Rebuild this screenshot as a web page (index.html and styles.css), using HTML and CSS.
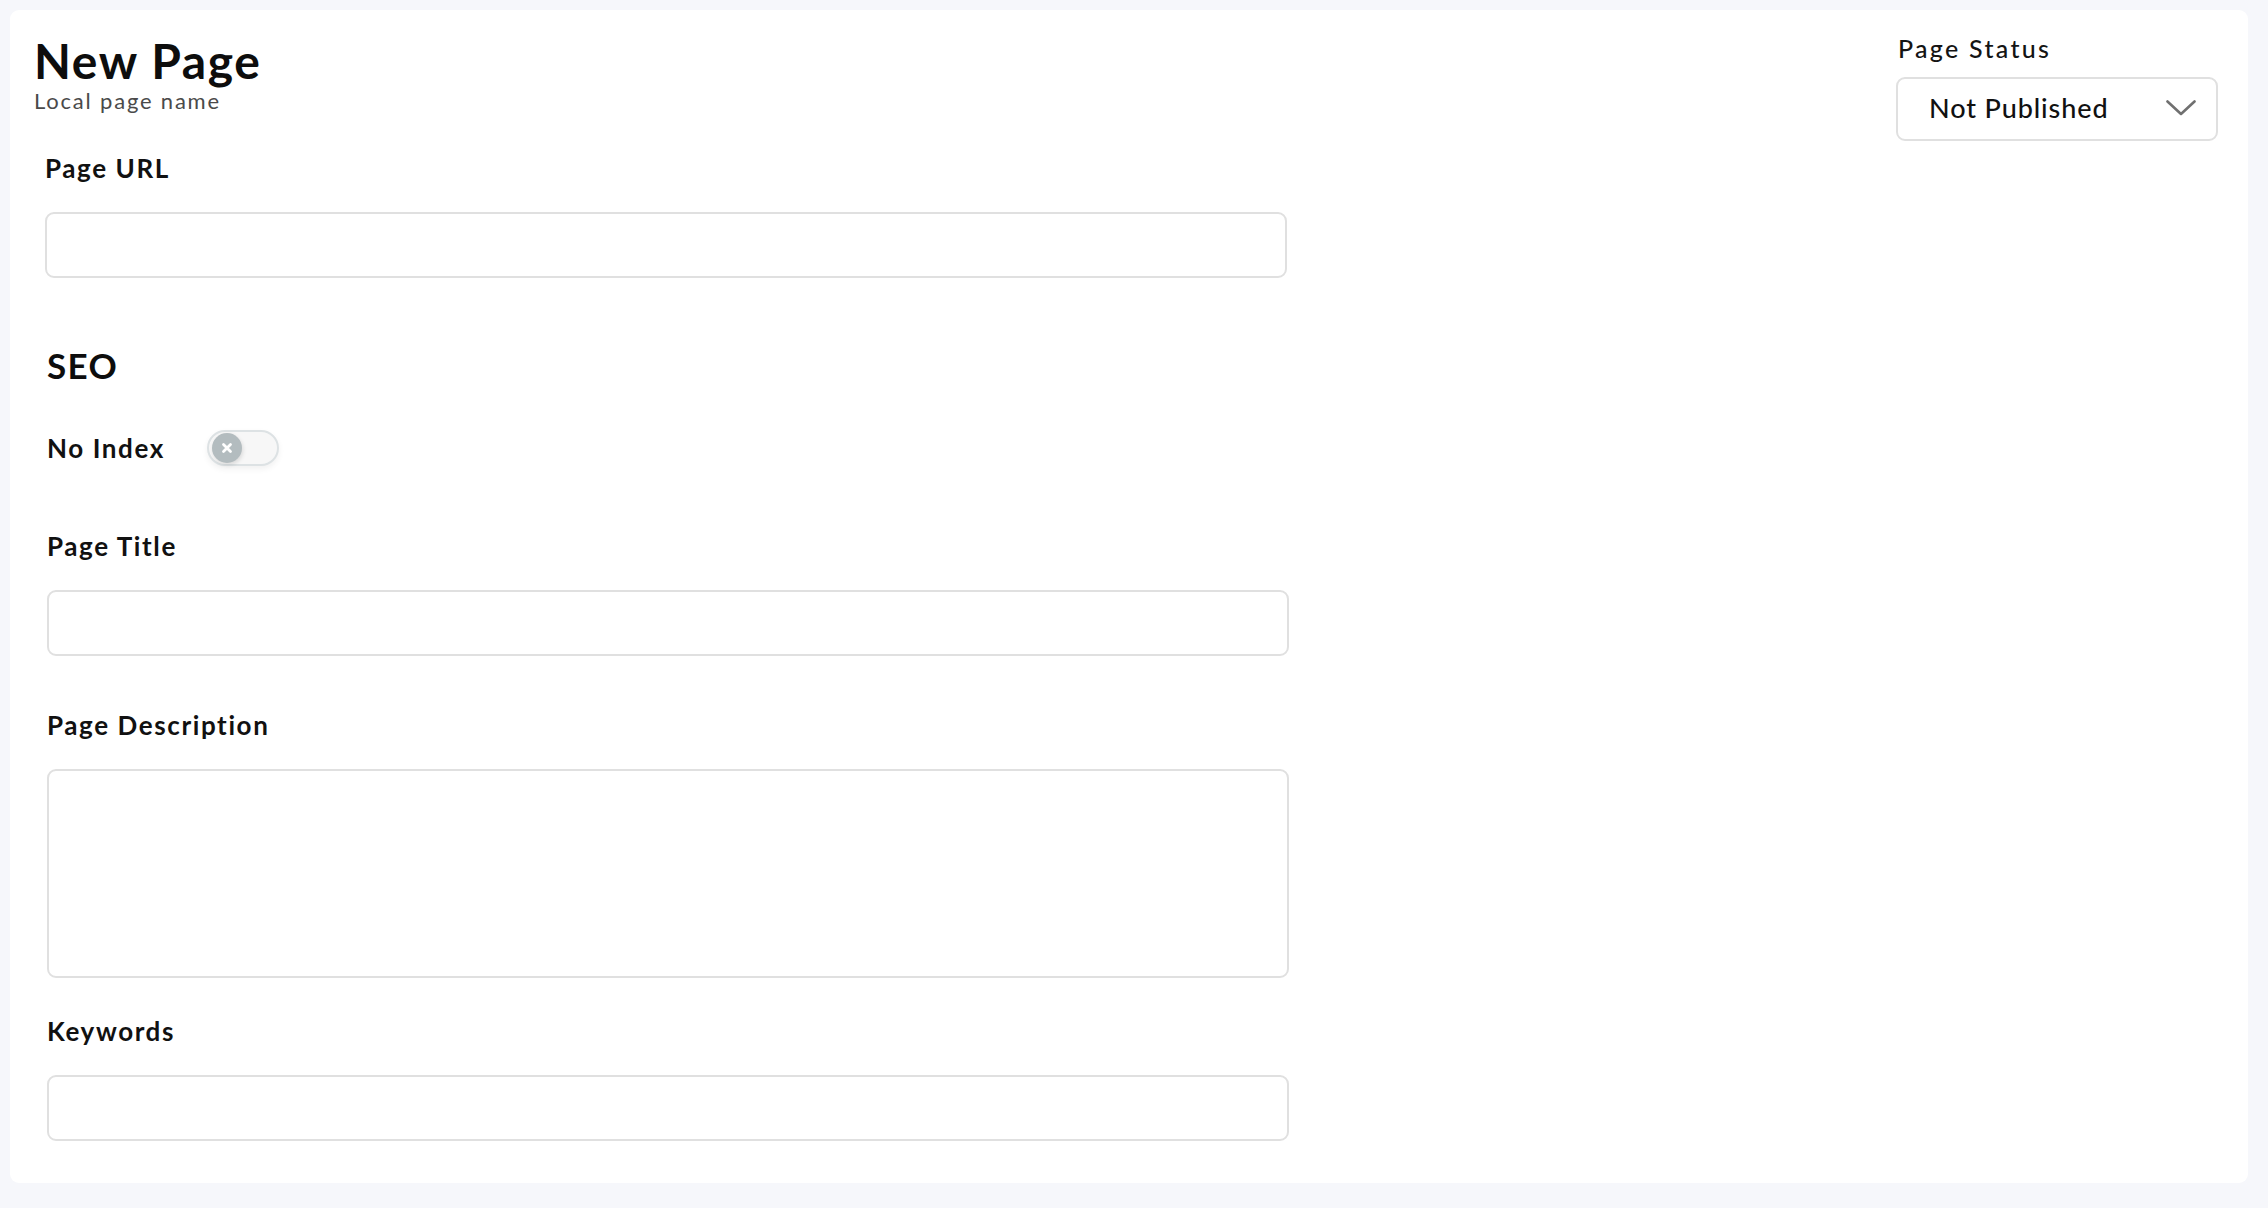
FILE: index.html
```html
<!DOCTYPE html>
<html lang="en">
<head>
<meta charset="utf-8">
<title>New Page</title>
<link rel="stylesheet" href="styles.css">
</head>
<body>
<main class="card">
  <header class="header">
    <div class="title-block">
      <h1 class="title">New Page</h1>
      <div class="subtitle">Local page name</div>
    </div>
    <div class="status-block">
      <div class="status-label">Page Status</div>
      <div class="select">
        <span class="select-value">Not Published</span>
        <svg class="chevron" width="30" height="16" viewBox="0 0 30 16" aria-hidden="true">
          <path d="M1.5 1.5 L15 14 L28.5 1.5" fill="none" stroke="#707070" stroke-width="2.6" stroke-linecap="round" stroke-linejoin="round"/>
        </svg>
      </div>
    </div>
  </header>

  <form class="form">
    <div class="url-group">
      <label class="label">Page URL</label>
      <div class="input"></div>
    </div>

    <h2 class="section-title">SEO</h2>

    <div class="toggle-row">
      <span class="label label-inline">No Index</span>
      <span class="toggle">
        <span class="knob">
          <svg width="12" height="12" viewBox="0 0 12 12" aria-hidden="true">
            <path d="M2.5 2.5 L9.5 9.5 M9.5 2.5 L2.5 9.5" stroke="#ffffff" stroke-width="2.8" stroke-linecap="round"/>
          </svg>
        </span>
      </span>
    </div>

    <label class="label label-title">Page Title</label>
    <div class="input"></div>

    <label class="label label-desc">Page Description</label>
    <div class="input textarea"></div>

    <label class="label label-keywords">Keywords</label>
    <div class="input"></div>
  </form>
</main>
</body>
</html>
```

FILE: styles.css
```css
* {
  box-sizing: border-box;
}

html, body {
  margin: 0;
  padding: 0;
}

body {
  background: #f6f7fb;
  padding: 10px 20px 25px 10px;
  font-family: "Lato", "Noto Sans", sans-serif;
  color: #111111;
}

.card {
  background: #ffffff;
  border-radius: 9px;
  width: 2238px;
  padding: 26px 30px 42px 24px;
}

.header {
  display: flex;
  justify-content: space-between;
  align-items: flex-start;
}

.title-block {
  padding-top: 1px;
}

.title {
  margin: 0;
  font-size: 48px;
  line-height: 48px;
  font-weight: 700;
  letter-spacing: 1.6px;
  color: #0d0d0d;
}

.subtitle {
  margin-top: 5px;
  font-size: 22px;
  line-height: 22px;
  letter-spacing: 1.8px;
  color: #4a4a4a;
}

.status-block {
  width: 322px;
  padding-top: 0;
}

.status-label {
  font-size: 25px;
  line-height: 25px;
  font-weight: 500;
  letter-spacing: 2.3px;
  color: #141414;
  padding-left: 2px;
}

.select {
  margin-top: 16px;
  height: 64px;
  border: 2px solid #e0e0e0;
  border-radius: 9px;
  display: flex;
  align-items: center;
  justify-content: space-between;
  padding: 0 20px 4px 31px;
}

.select-value {
  font-size: 27px;
  line-height: 27px;
  font-weight: 500;
  letter-spacing: 0.9px;
  color: #111111;
}

.chevron {
  display: block;
  margin-top: 2px;
}

.form {
  margin-top: 14px;
  padding-left: 13px;
  width: 1279px;
  display: flex;
  flex-direction: column;
}

.url-group {
  margin-left: -2px;
}

.label {
  display: block;
  font-size: 26px;
  line-height: 26px;
  font-weight: 700;
  letter-spacing: 1.6px;
  color: #111111;
  margin-bottom: 31px;
}

.input {
  width: 1242px;
  height: 66px;
  border: 2px solid #e0e0e0;
  border-radius: 9px;
  background: #ffffff;
}

.textarea {
  height: 209px;
}

.section-title {
  margin: 70px 0 0 0;
  font-size: 35px;
  line-height: 35px;
  font-weight: 700;
  letter-spacing: 1.4px;
  color: #0d0d0d;
}

.toggle-row {
  margin-top: 47px;
  height: 36px;
  display: flex;
  align-items: center;
}

.label-inline {
  margin-bottom: 0;
  width: 160px;
}

.toggle {
  position: relative;
  width: 72px;
  height: 36px;
  border-radius: 18px;
  background: #f7f7f7;
  border: 2px solid #dde2e4;
  box-shadow: 0 3px 6px rgba(0, 0, 0, 0.06);
  display: flex;
  align-items: center;
  padding-left: 3px;
}

.knob {
  width: 30px;
  height: 30px;
  border-radius: 50%;
  background: #b3bcbf;
  display: flex;
  align-items: center;
  justify-content: center;
  box-shadow: 1px 2px 4px rgba(0, 0, 0, 0.12);
}

.knob svg {
  display: block;
}

.label-title {
  margin-top: 67px;
}

.label-desc {
  margin-top: 56px;
}

.label-keywords {
  margin-top: 40px;
}
```
